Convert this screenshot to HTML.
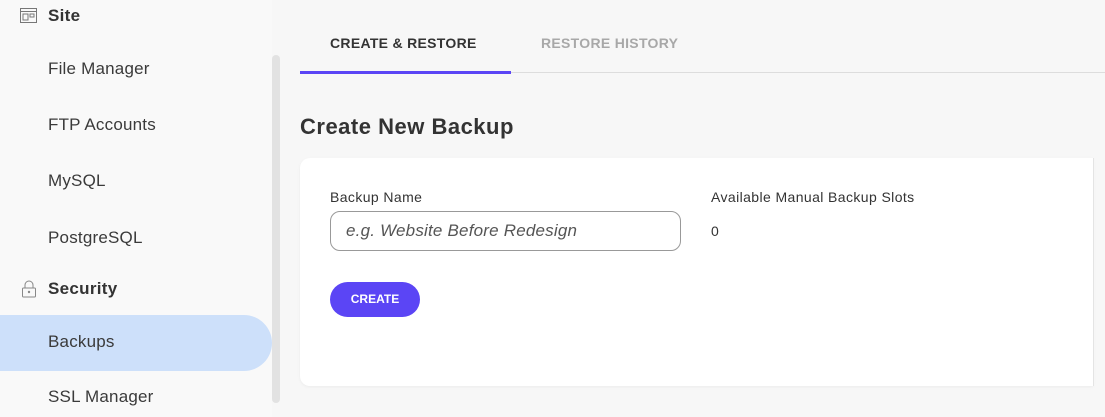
<!DOCTYPE html>
<html><head><style>
*{margin:0;padding:0;box-sizing:border-box}
body{width:1105px;height:417px;overflow:hidden;background:#f7f7f7;font-family:"Liberation Sans",sans-serif;position:relative;color:#333}
.sb{position:absolute;left:0;top:0;width:272px;height:417px;background:#f9f9f9}
.scroll{position:absolute;left:272px;top:55px;width:8px;height:348px;background:#e2e2e2;border-radius:4px}
.it{position:absolute;left:48px;font-size:17px;color:#3a3a3a;letter-spacing:.2px}
.hd{position:absolute;left:48px;font-size:17px;font-weight:bold;color:#333;letter-spacing:.3px}
.sel{position:absolute;left:0;top:315px;width:272px;height:56px;background:#cde0fa;border-radius:0 28px 28px 0}
.tab{position:absolute;top:35px;font-size:14px;font-weight:bold;letter-spacing:.3px}
.card{position:absolute;left:300px;top:158px;width:793px;height:228px;background:#fff;border-radius:10px 0 0 10px;box-shadow:0 1px 3px rgba(0,0,0,.05)}
.lbl{position:absolute;font-size:14px;color:#333;letter-spacing:.4px}
</style></head><body>
<div class="sb">
<svg style="position:absolute;left:20px;top:8px" width="17" height="15" viewBox="0 0 17 15"><rect x=".5" y=".5" width="16" height="14" fill="none" stroke="#777"/><line x1="1" y1="3.5" x2="16" y2="3.5" stroke="#777"/><rect x="3" y="6" width="5" height="6" fill="none" stroke="#777"/><rect x="10" y="6" width="4" height="3" fill="none" stroke="#777"/></svg>
<div class="hd" style="top:6px">Site</div>
<div class="it" style="top:59px">File Manager</div>
<div class="it" style="top:115px">FTP Accounts</div>
<div class="it" style="top:171px">MySQL</div>
<div class="it" style="top:228px">PostgreSQL</div>
<svg style="position:absolute;left:21px;top:280px" width="16" height="18" viewBox="0 0 16 18"><path d="M4 8V5a4 4 0 0 1 8 0v3" fill="none" stroke="#888"/><rect x="1.5" y="8" width="13" height="9" rx="1" fill="none" stroke="#888"/><circle cx="8" cy="12" r="1.2" fill="#888"/></svg>
<div class="hd" style="top:279px">Security</div>
<div class="sel"></div>
<div class="it" style="top:332px">Backups</div>
<div class="it" style="top:387px">SSL Manager</div>
</div>
<div class="scroll"></div>
<div class="tab" style="left:330px;color:#333">CREATE &amp; RESTORE</div>
<div class="tab" style="left:541px;color:#a8a8a8">RESTORE HISTORY</div>
<div style="position:absolute;left:300px;top:72px;width:805px;height:1px;background:#ddd"></div>
<div style="position:absolute;left:300px;top:71px;width:211px;height:3px;background:#5b45f5"></div>
<div style="position:absolute;left:300px;top:114px;font-size:22px;font-weight:bold;color:#333;letter-spacing:.5px">Create New Backup</div>
<div class="card"></div>
<div style="position:absolute;left:1093px;top:158px;width:1px;height:228px;background:#e4e4e4"></div>
<div class="lbl" style="left:330px;top:189px">Backup Name</div>
<div class="lbl" style="left:711px;top:189px">Available Manual Backup Slots</div>
<div style="position:absolute;left:330px;top:211px;width:351px;height:40px;border:1px solid #999;border-radius:10px"></div>
<div style="position:absolute;left:346px;top:221px;font-size:17px;font-style:italic;color:#555;letter-spacing:.2px">e.g. Website Before Redesign</div>
<div style="position:absolute;left:711px;top:223px;font-size:14px">0</div>
<div style="position:absolute;left:330px;top:282px;width:90px;height:35px;background:#5b45f5;border-radius:18px;color:#fff;font-size:12px;font-weight:bold;text-align:center;line-height:35px">CREATE</div>
</body></html>
